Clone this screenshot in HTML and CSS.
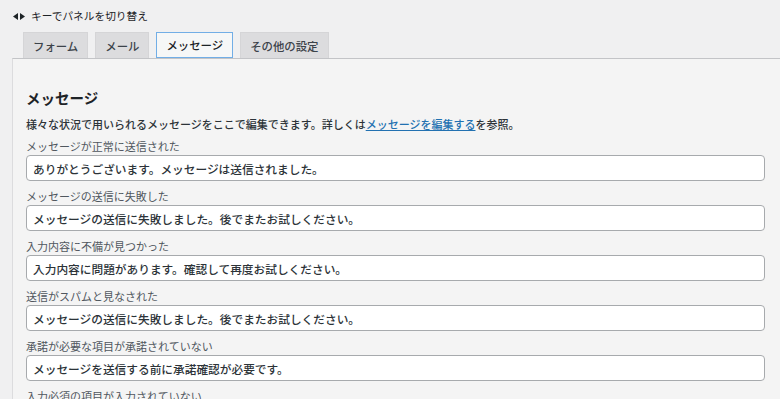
FILE: index.html
```html
<!DOCTYPE html>
<html>
<head>
	<meta charset="utf-8">
	<title>メッセージ</title>
	<link rel="stylesheet" href="styles.css">
</head>
<body>
	<div class="hint">
		<svg class="hint-arrows" width="12" height="7" viewBox="0 0 12 7"><path d="M0 3.5L5 0v7z M12 3.5L7 0v7z" fill="#1d2327"/></svg>
		<span>キーでパネルを切り替え</span>
	</div>

	<div class="tabs">
		<a class="tab">フォーム</a>
		<a class="tab">メール</a>
		<a class="tab tab-active">メッセージ</a>
		<a class="tab">その他の設定</a>
	</div>

	<div class="panel">
		<h2>メッセージ</h2>
		<p class="desc">様々な状況で用いられるメッセージをここで編集できます。詳しくは<a href="#">メッセージを編集する</a>を参照。</p>

		<div class="field">
			<label>メッセージが正常に送信された</label>
			<input type="text" value="ありがとうございます。メッセージは送信されました。">
		</div>
		<div class="field">
			<label>メッセージの送信に失敗した</label>
			<input type="text" value="メッセージの送信に失敗しました。後でまたお試しください。">
		</div>
		<div class="field">
			<label>入力内容に不備が見つかった</label>
			<input type="text" value="入力内容に問題があります。確認して再度お試しください。">
		</div>
		<div class="field">
			<label>送信がスパムと見なされた</label>
			<input type="text" value="メッセージの送信に失敗しました。後でまたお試しください。">
		</div>
		<div class="field">
			<label>承諾が必要な項目が承諾されていない</label>
			<input type="text" value="メッセージを送信する前に承諾確認が必要です。">
		</div>
		<div class="field">
			<label>入力必須の項目が入力されていない</label>
			<input type="text" value="必須項目に入力してください。">
		</div>
	</div>
</body>
</html>
```

FILE: styles.css
```css
body {
	margin: 0;
	background-color: #f0f0f1;
	font-family: "Noto Sans CJK JP", "Noto Sans", sans-serif;
	color: #1d2327;
	overflow: hidden;
}

.hint {
	display: flex;
	align-items: center;
	padding: 8px 0 0 13px;
	height: 16px;
	font-size: 10.7px;
	line-height: 16px;
}

.hint-arrows {
	margin-right: 6px;
}

.tabs {
	display: flex;
	gap: 7px;
	margin: 8px 0 0 23px;
	height: 26px;
}

.tab {
	display: flex;
	align-items: center;
	padding: 0 9px;
	font-size: 11.4px;
	font-weight: 500;
	color: #3c434a;
	background-color: #dcdcde;
	border: 1px solid #d5d5d7;
	border-bottom: none;
}

.tab-active {
	background-color: #f6f7f7;
	color: #1d2327;
	border: 1px solid #72aee6;
}

.panel {
	margin-left: 12px;
	padding: 0 15px 0 13px;
	background-color: #f4f4f4;
	border-top: 1px solid #c3c4c7;
	border-left: 1px solid #dcdcde;
	min-height: 400px;
}

.panel h2 {
	margin: 0;
	padding-top: 29px;
	font-size: 14.5px;
	line-height: 20px;
	font-weight: 700;
	color: #1d2327;
}

.desc {
	margin: 8px 0 0;
	font-size: 11px;
	line-height: 16px;
	font-weight: 500;
	color: #2c3338;
}

.desc a {
	color: #2271b1;
	text-decoration: underline;
}

.field {
	display: flex;
	flex-direction: column;
	margin-top: 6px;
}

.field + .field {
	margin-top: 7px;
}

.field label {
	font-size: 11px;
	line-height: 16px;
	color: #50575e;
	margin-bottom: 1px;
}

.field input {
	box-sizing: border-box;
	height: 26px;
	padding: 0 6px;
	font-family: inherit;
	font-size: 11.7px;
	font-weight: 500;
	color: #2c3338;
	background-color: #fff;
	border: 1px solid #a7aaad;
	border-radius: 4px;
}
```
